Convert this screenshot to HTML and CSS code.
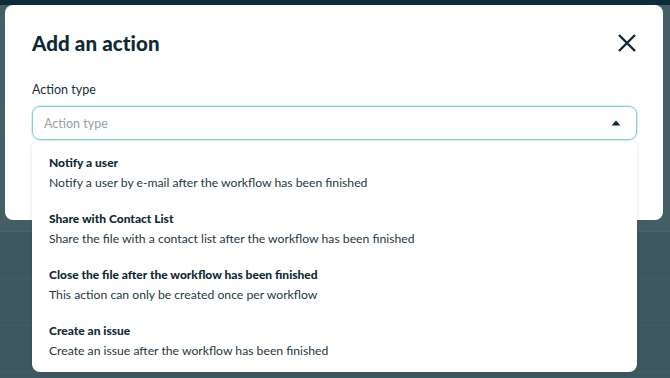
FILE: index.html
```html
<!DOCTYPE html>
<html lang="en">
<head>
<meta charset="utf-8">
<title>Add an action</title>
<link rel="stylesheet" href="styles.css">
</head>
<body>
<div class="page">
  <div class="topbar"></div>
  <div class="backdrop">
    <div class="bg-upper"></div>
    <div class="bg-row"></div>
    <div class="bg-row"></div>
    <div class="bg-row"></div>
  </div>
</div>

<div class="modal">
  <div class="modal-head">
    <h1 class="modal-title">Add an action</h1>
    <button class="close" aria-label="Close">
      <svg width="20" height="20" viewBox="0 0 20 20"><path d="M2 2 L18 18 M18 2 L2 18" stroke="#0f2a33" stroke-width="2.4" stroke-linecap="butt" fill="none"/></svg>
    </button>
  </div>
  <label class="field-label">Action type</label>
  <div class="select">
    <span class="placeholder">Action type</span>
    <svg class="caret" width="10" height="6" viewBox="0 0 10 6"><path d="M0.5 5.5 L5 0.5 L9.5 5.5 Z" fill="#0f2a33"/></svg>
  </div>
</div>

<ul class="menu">
  <li class="option">
    <div class="opt-title">Notify a user</div>
    <div class="opt-desc">Notify a user by e-mail after the workflow has been finished</div>
  </li>
  <li class="option">
    <div class="opt-title">Share with Contact List</div>
    <div class="opt-desc">Share the file with a contact list after the workflow has been finished</div>
  </li>
  <li class="option">
    <div class="opt-title">Close the file after the workflow has been finished</div>
    <div class="opt-desc">This action can only be created once per workflow</div>
  </li>
  <li class="option">
    <div class="opt-title">Create an issue</div>
    <div class="opt-desc">Create an issue after the workflow has been finished</div>
  </li>
</ul>
</body>
</html>
```

FILE: styles.css
```css
* { box-sizing: border-box; }
html, body { margin: 0; padding: 0; }
body {
  width: 670px;
  height: 378px;
  overflow: hidden;
  position: relative;
  background: #3e5860;
  font-family: "Lato", "Noto Sans", sans-serif;
  color: #0f2a33;
}
.page { display: flex; flex-direction: column; height: 100%; }
.topbar { height: 5px; background: #0b2d3a; }
.backdrop { flex: 1; display: flex; flex-direction: column; }
.bg-upper { height: 227px; background: #445e65; border-bottom: 1px solid #4b646a; }
.bg-row { height: 47px; border-bottom: 1px solid #435d64; }

.modal {
  position: absolute;
  left: 5px;
  top: 5px;
  width: 658px;
  height: 215px;
  background: #fff;
  border-radius: 8px;
  padding: 26px 26px 0 27px;
  display: flex;
  flex-direction: column;
}
.modal-head { display: flex; align-items: center; justify-content: space-between; height: 24px; }
.modal-title { margin: 0; font-size: 20.5px; font-weight: 900; letter-spacing: 0.1px; color: #0f2a33; line-height: 24px; }
.close { border: 0; background: none; padding: 0; width: 20px; height: 20px; display: flex; }
.field-label { margin-top: 27px; font-size: 12.5px; line-height: 16px; color: #1a3038; }
.select {
  margin-top: 8px;
  height: 34px;
  border: 1px solid #86cfcb;
  border-radius: 8px;
  box-shadow: 0 0 0 1px #d9f0ee;
  display: flex;
  align-items: center;
  justify-content: space-between;
  padding: 0 15px 0 11px;
}
.placeholder { font-size: 12.5px; color: #98a1a6; }
.caret { display: block; }

.menu {
  position: absolute;
  left: 32px;
  top: 142px;
  width: 605px;
  height: 230px;
  margin: 0;
  padding: 13px 17px 0 17px;
  list-style: none;
  background: #fff;
  border-radius: 4px 4px 8px 8px;
  box-shadow: 0 1px 4px rgba(0,0,0,0.12);
  display: flex;
  flex-direction: column;
}
.option { height: 56px; flex-shrink: 0; display: flex; flex-direction: column; gap: 4px; }
.opt-title { font-size: 12px; font-weight: 900; line-height: 16px; color: #0f2a33; }
.opt-desc { font-size: 12.2px; line-height: 16px; color: #1f3840; }
```
